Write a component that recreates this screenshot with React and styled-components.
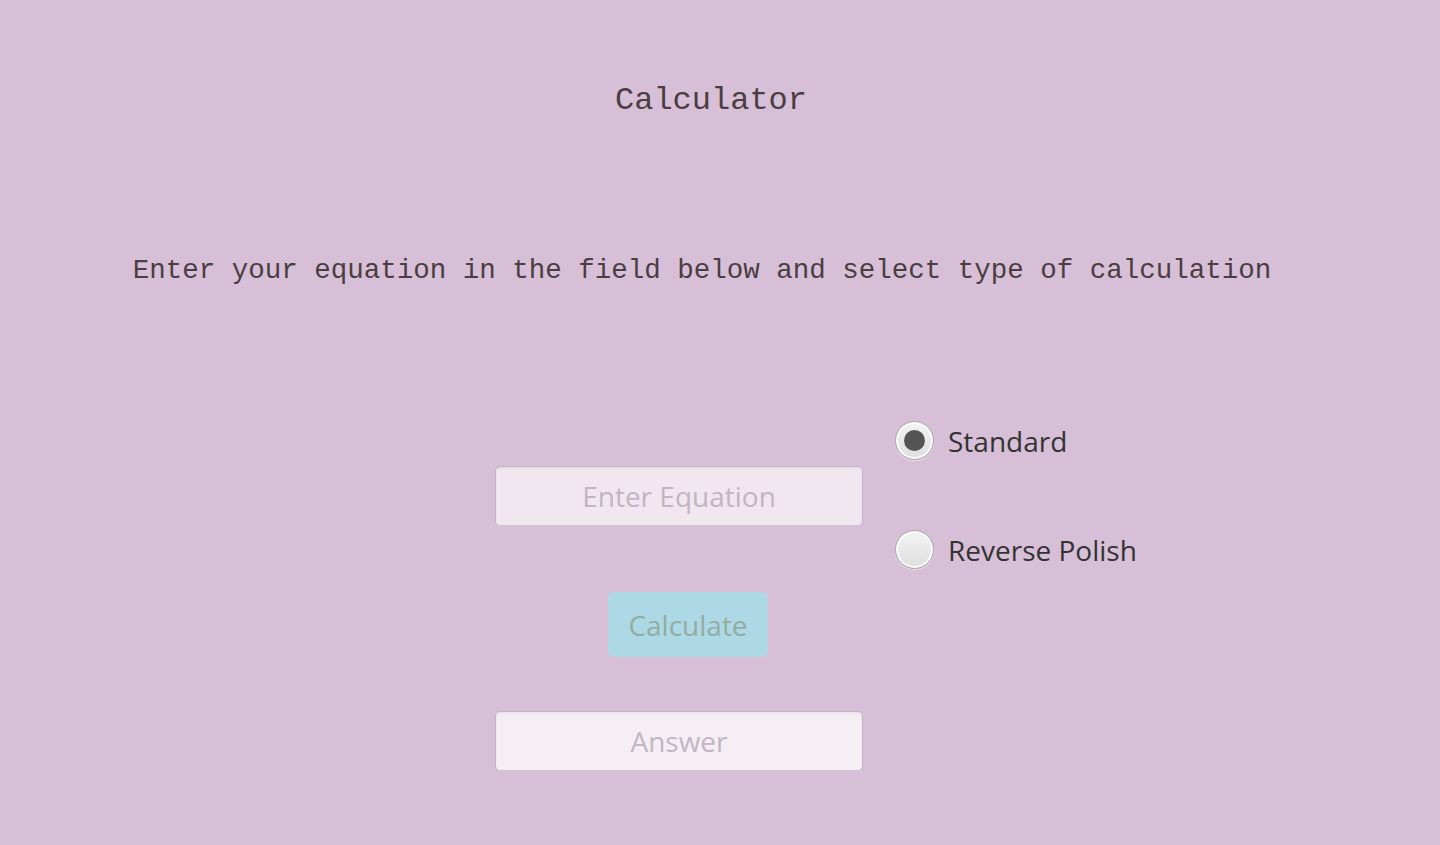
import React, { useState } from 'react';
import styled, { createGlobalStyle } from 'styled-components';

const GlobalStyle = createGlobalStyle`
  html, body {
    margin: 0;
    padding: 0;
    background: #d8bfd8;
  }
  * {
    box-sizing: border-box;
  }
`;

const Page = styled.div`
  min-height: 100vh;
  background: #d8bfd8;
  display: flex;
  flex-direction: column;
  padding-top: 81px;
`;

const Title = styled.h1`
  margin: 0;
  font-family: "Liberation Mono", "Courier New", monospace;
  font-weight: normal;
  font-size: 32px;
  line-height: 40px;
  color: #4a3e42;
  text-align: center;
  padding-right: 18px;
`;

const Subtitle = styled.p`
  margin: 133px 0 0;
  font-family: "Liberation Mono", "Courier New", monospace;
  font-size: 27.5px;
  line-height: 34px;
  color: #4a3e42;
  text-align: center;
  padding-right: 36px;
  white-space: nowrap;
`;

const Form = styled.div`
  margin-top: 132px;
  display: grid;
  grid-template-columns: 368px auto;
  column-gap: 32px;
  padding-left: 495px;
`;

const Fields = styled.div`
  display: flex;
  flex-direction: column;
  padding-top: 46px;
`;

const TextField = styled.input`
  width: 368px;
  height: 60px;
  border: 1px solid #c2b4c2;
  border-bottom-color: #cfc3cf;
  border-radius: 5px;
  background: ${props => (props.light ? '#f5eef5' : '#f0e7f0')};
  box-shadow: inset 0 2px 2px rgba(120, 100, 120, 0.08);
  font-family: "Open Sans", "Noto Sans", sans-serif;
  font-size: 28px;
  color: #333;
  text-align: center;
  outline: none;

  &::placeholder {
    color: #c3b5c3;
  }
`;

const CalcButton = styled.button`
  align-self: flex-start;
  margin: 66px 0 0 113px;
  width: 160px;
  height: 65px;
  border: none;
  border-radius: 6px;
  background: #add8e6;
  color: #93ae9f;
  font-family: "Open Sans", "Noto Sans", sans-serif;
  font-size: 28px;
  cursor: pointer;
`;

const AnswerField = styled(TextField)`
  margin-top: 54px;
`;

const RadioGroup = styled.div`
  display: flex;
  flex-direction: column;
  gap: 69px;
`;

const RadioRow = styled.label`
  display: flex;
  align-items: center;
  gap: 14px;
  height: 40px;
  cursor: pointer;
`;

const RadioCircle = styled.span`
  width: 39px;
  height: 39px;
  border-radius: 50%;
  border: 1px solid #a9a9a9;
  background: linear-gradient(#f4f4f4, #dedede);
  box-shadow: inset 0 0 0 2px #fbfbfb, 0 1px 1px rgba(255, 255, 255, 0.5);
  display: flex;
  align-items: center;
  justify-content: center;
`;

const RadioDot = styled.span`
  width: 21px;
  height: 21px;
  border-radius: 50%;
  background: #555;
`;

const RadioLabel = styled.span`
  font-family: "Open Sans", "Noto Sans", sans-serif;
  font-size: 28px;
  color: #333;
  line-height: 40px;
  padding-top: 1px;
`;

const modes = ['Standard', 'Reverse Polish'];

export default function App() {
  const [mode, setMode] = useState('Standard');
  return (
    <>
      <GlobalStyle />
      <Page>
        <Title>Calculator</Title>
        <Subtitle>Enter your equation in the field below and select type of calculation</Subtitle>
        <Form>
          <Fields>
            <TextField placeholder="Enter Equation" />
            <CalcButton>Calculate</CalcButton>
            <AnswerField light placeholder="Answer" readOnly />
          </Fields>
          <RadioGroup>
            {modes.map(m => (
              <RadioRow key={m} onClick={() => setMode(m)}>
                <RadioCircle>{mode === m && <RadioDot />}</RadioCircle>
                <RadioLabel>{m}</RadioLabel>
              </RadioRow>
            ))}
          </RadioGroup>
        </Form>
      </Page>
    </>
  );
}
